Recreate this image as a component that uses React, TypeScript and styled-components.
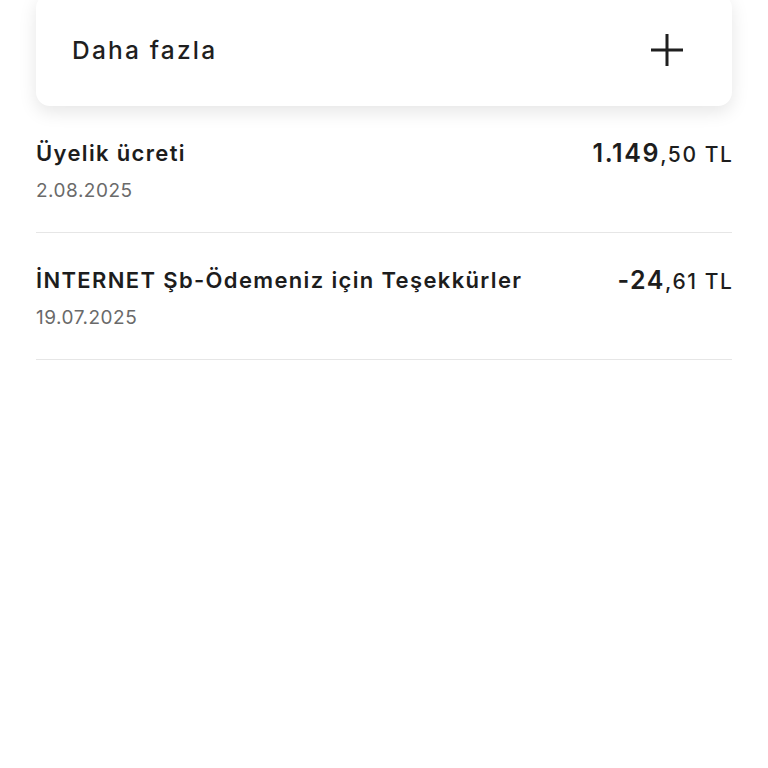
import React from "react";
import styled, { createGlobalStyle } from "styled-components";

const GlobalStyle = createGlobalStyle`
  body {
    margin: 0;
    background: #ffffff;
    font-family: "Inter", "Open Sans", sans-serif;
    color: #1d1d1d;
  }
`;

const Page = styled.div`
  padding: 0 36px;
  overflow: hidden;
  height: 768px;
  box-sizing: border-box;
`;

const MoreCard = styled.div`
  display: flex;
  align-items: center;
  justify-content: space-between;
  height: 112px;
  margin-top: -6px;
  padding: 0 48px 0 36px;
  box-sizing: border-box;
  background: #fff;
  border-radius: 14px;
  box-shadow: 0 6px 18px rgba(0, 0, 0, 0.1);
`;

const MoreLabel = styled.span`
  font-size: 24.5px;
  font-weight: 550;
  letter-spacing: 2.2px;
  color: #1f1f1f;
`;

const Row = styled.div`
  display: flex;
  justify-content: space-between;
  align-items: flex-start;
  padding: 33px 0 29px;
  border-bottom: 1.5px solid #e6e6e6;
`;

const Info = styled.div`
  display: flex;
  flex-direction: column;
  gap: 12px;
`;

const Title = styled.span`
  font-size: 22px;
  font-weight: 600;
  line-height: 28px;
  letter-spacing: 1.35px;
`;

const DateText = styled.span`
  font-size: 19px;
  line-height: 24px;
  color: #6a6a6a;
  letter-spacing: 0.5px;
`;

const Amount = styled.span`
  line-height: 28px;
  white-space: nowrap;
  letter-spacing: 1.6px;
  margin-right: -1.6px;
`;

const Whole = styled.span`
  font-size: 25px;
  font-weight: 600;
`;

const Fraction = styled.span`
  font-size: 21px;
  font-weight: 500;
`;

const PlusIcon = () => (
  <svg width="34" height="34" viewBox="0 0 34 34">
    <path d="M17 1v32M1 17h32" stroke="#1f1f1f" strokeWidth="3" />
  </svg>
);

const items = [
  { title: "Üyelik ücreti", date: "2.08.2025", whole: "1.149", frac: ",50 TL" },
  {
    title: "İNTERNET Şb-Ödemeniz için Teşekkürler",
    date: "19.07.2025",
    whole: "-24",
    frac: ",61 TL",
  },
];

export default function App() {
  return (
    <>
      <GlobalStyle />
      <Page>
        <MoreCard>
          <MoreLabel>Daha fazla</MoreLabel>
          <PlusIcon />
        </MoreCard>
        {items.map((item) => (
          <Row key={item.date}>
            <Info>
              <Title>{item.title}</Title>
              <DateText>{item.date}</DateText>
            </Info>
            <Amount>
              <Whole>{item.whole}</Whole>
              <Fraction>{item.frac}</Fraction>
            </Amount>
          </Row>
        ))}
      </Page>
    </>
  );
}
